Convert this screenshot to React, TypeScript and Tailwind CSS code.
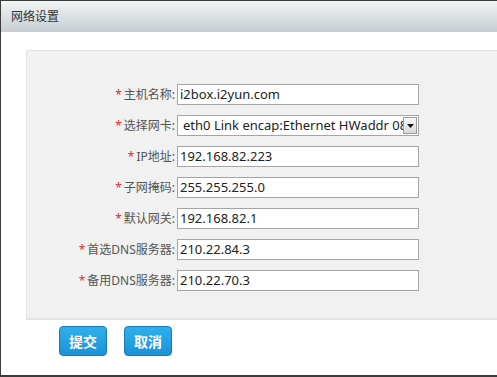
import React from 'react';

const font = { fontFamily: '"Noto Sans", "Noto Sans CJK SC", sans-serif' };

const fields = [
  { label: '主机名称', value: 'i2box.i2yun.com' },
  { label: '选择网卡', value: 'eth0 Link encap:Ethernet HWaddr 08:00:27:5C:9E:1A', select: true },
  { label: 'IP地址', value: '192.168.82.223' },
  { label: '子网掩码', value: '255.255.255.0' },
  { label: '默认网关', value: '192.168.82.1' },
  { label: '首选DNS服务器', value: '210.22.84.3' },
  { label: '备用DNS服务器', value: '210.22.70.3' },
];

const Row: React.FC<{ label: string; value: string; select?: boolean }> = ({ label, value, select }) => (
  <div className="flex items-center h-[21px]">
    <div className="w-[150px] pr-[2px] text-right text-[12px] text-[#555] whitespace-nowrap leading-none">
      <span className="text-[#e03030] mr-[2px]">*</span>
      {label}:
    </div>
    {select ? (
      <div className="w-[242px] h-[21px] border border-[#a5a5a5] bg-white flex items-center overflow-hidden">
        <div className="flex-1 overflow-hidden whitespace-nowrap pl-[5px] text-[13px] text-[#222] leading-none">{value}</div>
        <div className="w-[14px] h-[17px] mr-[1px] border border-[#9a9a9a] bg-gradient-to-b from-[#f8f8f8] to-[#d8d8d8] flex items-center justify-center shrink-0">
          <svg width="7" height="4" viewBox="0 0 7 4">
            <path d="M0 0 L7 0 L3.5 4 Z" fill="#111" />
          </svg>
        </div>
      </div>
    ) : (
      <div className="w-[242px] h-[21px] border border-[#a5a5a5] bg-white flex items-center pl-[2px] text-[13px] text-[#222] leading-none whitespace-nowrap">
        {value}
      </div>
    )}
  </div>
);

export default function App() {
  return (
    <div style={font} className="w-[520px] h-[377px] bg-white border-t border-l border-b-2 border-[#3c3c3c] overflow-hidden">
      <div className="h-[31px] bg-gradient-to-b from-[#f3f5f6] to-[#c6cdd2] flex items-center pl-[10px] text-[12px] text-[#333]">
        网络设置
      </div>
      <div className="pt-[18px] pl-[25px]">
        <div className="bg-[#f0f1f0] border-t border-l border-b-2 border-[#e2e4e3] pt-[33px] pb-[27px] flex flex-col gap-[10px]">
          {fields.map((f) => (
            <Row key={f.label} {...f} />
          ))}
        </div>
        <div className="flex gap-[17px] mt-[6px] ml-[33px]">
          {['提交', '取消'].map((t) => (
            <button
              key={t}
              className="w-[48px] h-[30px] rounded-[4px] border border-[#1a79b8] bg-gradient-to-b from-[#2fb0ec] to-[#1b92d8] text-white text-[14px] font-bold"
            >
              {t}
            </button>
          ))}
        </div>
      </div>
    </div>
  );
}
